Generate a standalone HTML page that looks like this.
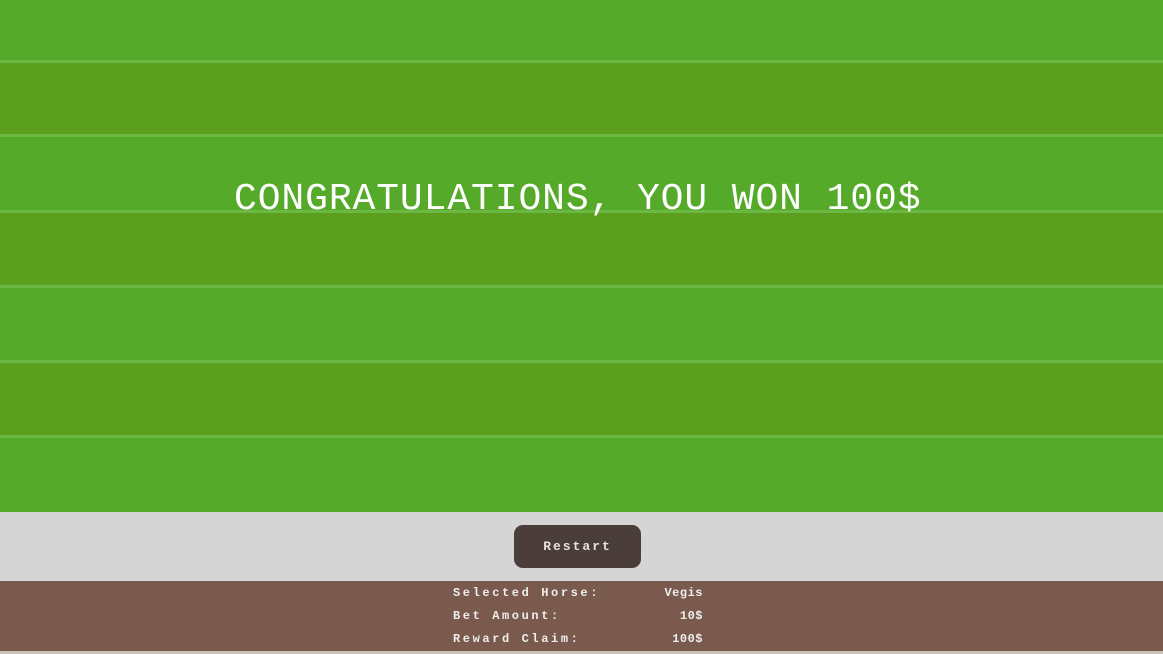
<!DOCTYPE html>
<html><head><style>
html,body{margin:0;padding:0;width:1163px;height:654px;overflow:hidden;background:#d5d5d5;font-family:"Liberation Mono",monospace}
.lane{position:absolute;left:0;width:1163px}
.l{background:#56aa2a}.d{background:#5c9f1f}
.line{position:absolute;left:0;width:1163px;height:3px;background:#6cb845}
.title{position:absolute;left:234px;top:178px;color:#fff;font-size:38px;letter-spacing:0.9px;line-height:44px;white-space:nowrap}
.btn{position:absolute;left:514px;top:525px;width:127px;height:43px;background:#4a3d3a;border-radius:9px;color:#e8e0dc;font-size:13px;font-weight:bold;letter-spacing:2px;text-align:center;line-height:43px}
.info{position:absolute;left:0;top:581px;width:1163px;height:70px;background:#7a5a4c}
.bl{position:absolute;left:0;top:651px;width:1163px;height:3px;background:#c9c0bb}
.row{position:absolute;left:453px;width:250px;color:#eee;font-size:12px;font-weight:bold;letter-spacing:2.6px}
.row span{position:absolute;right:0;top:0;letter-spacing:0.5px}
</style></head><body>
<div class="lane l" style="top:0;height:61px"></div>
<div class="lane d" style="top:61px;height:75px"></div>
<div class="lane l" style="top:136px;height:75px"></div>
<div class="lane d" style="top:211px;height:75px"></div>
<div class="lane l" style="top:286px;height:75px"></div>
<div class="lane d" style="top:361px;height:75px"></div>
<div class="lane l" style="top:436px;height:76px"></div>
<div class="line" style="top:60px"></div>
<div class="line" style="top:134px"></div>
<div class="line" style="top:210px"></div>
<div class="line" style="top:285px"></div>
<div class="line" style="top:360px"></div>
<div class="line" style="top:435px"></div>
<div class="title">CONGRATULATIONS, YOU WON 100$</div>
<div class="btn">Restart</div>
<div class="info"></div>
<div class="bl"></div>
<div class="row" style="top:586px">Selected Horse:<span>Vegis</span></div>
<div class="row" style="top:609px">Bet Amount:<span>10$</span></div>
<div class="row" style="top:632px">Reward Claim:<span>100$</span></div>
</body></html>
